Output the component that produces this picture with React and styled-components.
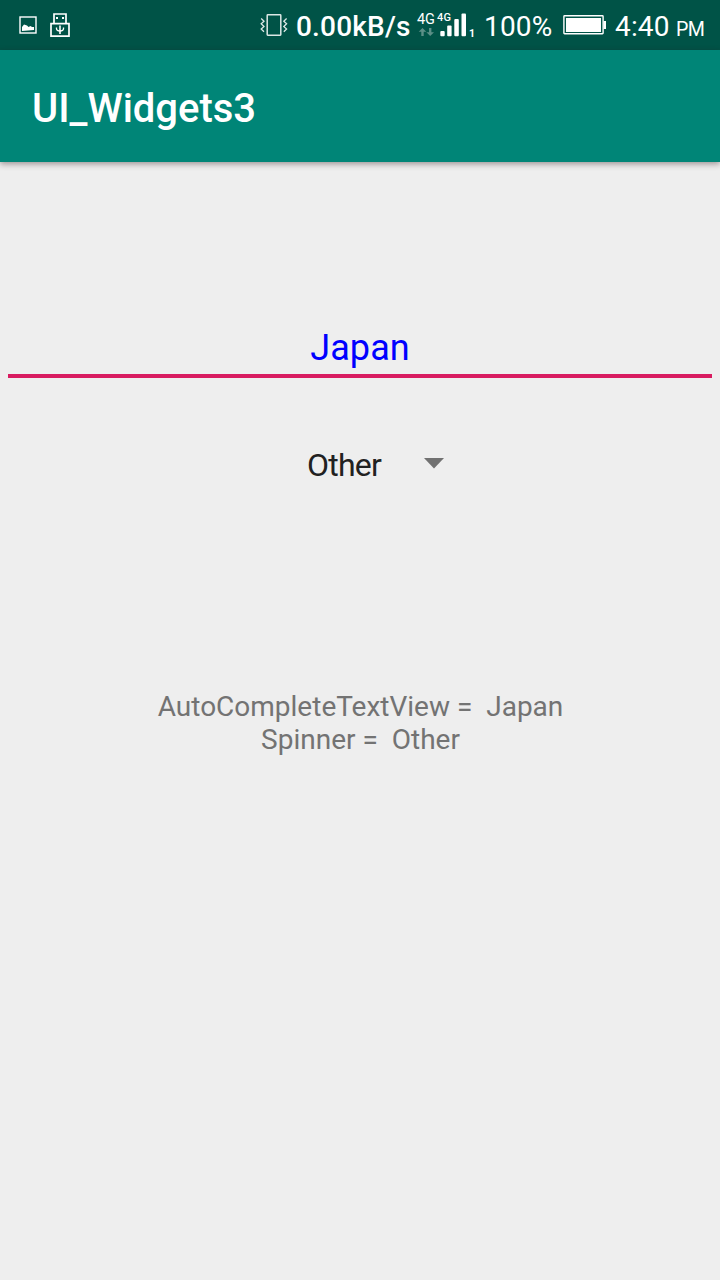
import React from "react";
import styled, { createGlobalStyle } from "styled-components";

const GlobalStyle = createGlobalStyle`
  * { box-sizing: border-box; }
  body { margin: 0; background: #eeeeee; font-family: Roboto, sans-serif; }
`;

const Screen = styled.div`
  width: 720px;
  height: 1280px;
  display: flex;
  flex-direction: column;
  background: #eeeeee;
  overflow: hidden;
`;

const StatusBar = styled.header`
  height: 50px;
  flex: none;
  display: flex;
  align-items: flex-start;
  padding-left: 16px;
  background: #005347;
  color: #ffffff;
`;

const StatusIcon = styled.svg`
  display: block;
  flex: none;
  width: ${(p) => p.$width}px;
  height: 50px;
  margin-left: ${(p) => p.$gap || 0}px;
`;

const StatusText = styled.span`
  flex: none;
  width: ${(p) => p.$width}px;
  margin-left: ${(p) => p.$gap || 0}px;
  padding-top: ${(p) => p.$top || 10}px;
  font-size: ${(p) => p.$size || 28}px;
  font-weight: ${(p) => p.$weight || 400};
  letter-spacing: ${(p) => p.$spacing || 0}px;
  line-height: 33px;
  white-space: nowrap;
`;

const Spacer = styled.div`
  flex: 1;
`;

const AppBar = styled.div`
  height: 112px;
  flex: none;
  display: flex;
  align-items: center;
  padding: 4px 32px 0;
  background: #008577;
  box-shadow: 0 2px 6px rgba(40, 20, 25, 0.42);
`;

const Title = styled.h1`
  margin: 0;
  font-size: 40px;
  font-weight: 500;
  line-height: 47px;
  color: #ffffff;
`;

const Content = styled.main`
  flex: 1;
  display: flex;
  flex-direction: column;
  padding: 165px 8px 0;
`;

const CountryField = styled.div`
  height: 51px;
  border-bottom: 4px solid #d81b60;
  font-size: 36px;
  line-height: 42px;
  letter-spacing: 0.1px;
  text-align: center;
  color: #0000ff;
`;

const Spinner = styled.div`
  display: flex;
  align-items: center;
  margin: 68px 0 0 299px;
  height: 38px;
`;

const SpinnerValue = styled.span`
  width: 117px;
  font-size: 32px;
  line-height: 38px;
  letter-spacing: -0.75px;
  color: #212121;
`;

const Arrow = styled.svg`
  display: block;
  width: 20px;
  height: 11px;
  margin-top: -4px;
`;

const Result = styled.p`
  margin: 206px 0 0;
  padding-left: 1px;
  font-size: 28px;
  line-height: 33px;
  text-align: center;
  white-space: pre;
  color: #737373;
`;

function PictureIcon() {
  return (
    <StatusIcon $width={24} viewBox="0 0 24 50">
      <rect x="4" y="17" width="16" height="16" fill="none" stroke="#fff" strokeWidth="1.4" />
      <path d="M6 31v-4l2-2.500 3 1 1.500 1.500 2-1 1.500 1H18v3z" fill="#fff" />
    </StatusIcon>
  );
}

function UsbIcon() {
  return (
    <StatusIcon $width={22} $gap={9} viewBox="0 0 22 50">
      <path d="M5 23v-9h12v9M2 23.6h18v12.6H2z" fill="none" stroke="#fff" strokeWidth="1.7" />
      <path d="M7 17h2v2H7zM13 17h2v2h-2z" fill="#fff" />
      <path d="M11 25.500v8.500" fill="none" stroke="#fff" strokeWidth="1.600" />
      <path d="M7.500 27.500v1.500q.3 2 3.500 2t3.500-2v-1.500" fill="none" stroke="#fff" strokeWidth="1.300" />
    </StatusIcon>
  );
}

function VibrateIcon() {
  return (
    <StatusIcon $width={28} viewBox="0 0 28 50">
      <rect x="7.2" y="14.8" width="13.6" height="20.4" rx="0.6" fill="none" stroke="#dce8e6" strokeWidth="1.5" />
      <path
        d="M1.2 18.5 4 21.2 1.2 23.8 4 26.4 1.2 29 4 31.8M26.6 18.5 23.8 21.2 26.6 23.8 23.8 26.4 26.6 29 23.8 31.8"
        fill="none"
        stroke="#dce8e6"
        strokeWidth="1.3"
      />
    </StatusIcon>
  );
}

function SignalIcon() {
  return (
    <StatusIcon $width={60} viewBox="0 0 60 50" fill="#fff" fontFamily="Roboto, sans-serif">
      <text x="1" y="24" fontSize="14.5" textLength="18">4G</text>
      <text x="21" y="21" fontSize="11" fontWeight="500" textLength="14">4G</text>
      <path d="M6.500 28 10.300 31.800H7.700V36H5.300v-4.200H2.700zM14.200 36l-3.800-3.800H13V28h2.400v4.200H18z" fill="#5c8f87" />
      <rect x="24.300" y="31" width="4.400" height="5.300" rx="1" />
      <rect x="31.200" y="25.500" width="4.400" height="10.800" rx="1" />
      <rect x="38.300" y="19" width="4.500" height="17.300" rx="1" />
      <rect x="45.500" y="13.600" width="4.500" height="22.700" rx="1" />
      <text x="53" y="36.500" fontSize="10.500" fontWeight="700">1</text>
    </StatusIcon>
  );
}

function BatteryIcon() {
  return (
    <StatusIcon $width={44} $gap={8} viewBox="0 0 44 50">
      <rect x="0.9" y="15.700" width="39.200" height="18" rx="0.700" fill="none" stroke="#fff" strokeWidth="1.400" />
      <path d="M3 18h35v14H3zM40.500 21H43v8h-2.500z" fill="#fff" />
    </StatusIcon>
  );
}

export default function App() {
  return (
    <Screen>
      <GlobalStyle />
      <StatusBar>
        <PictureIcon />
        <UsbIcon />
        <Spacer />
        <VibrateIcon />
        <StatusText $gap={8} $width={120} $weight={500} $spacing={0.2}>0.00kB/s</StatusText>
        <SignalIcon />
        <StatusText $gap={8} $width={71} $spacing={0.2}>100%</StatusText>
        <BatteryIcon />
        <StatusText $gap={8} $width={61} $spacing={0.15}>4:40</StatusText>
        <StatusText $width={44} $size={19.6} $top={13} $spacing={-0.5}>PM</StatusText>
      </StatusBar>
      <AppBar>
        <Title>UI_Widgets3</Title>
      </AppBar>
      <Content>
        <CountryField>Japan</CountryField>
        <Spinner>
          <SpinnerValue>Other</SpinnerValue>
          <Arrow viewBox="0 0 20 11">
            <path d="M0 0h20L10 10.500z" fill="#717171" />
          </Arrow>
        </Spinner>
        <Result>{"AutoCompleteTextView =  Japan\nSpinner =  Other"}</Result>
      </Content>
    </Screen>
  );
}
